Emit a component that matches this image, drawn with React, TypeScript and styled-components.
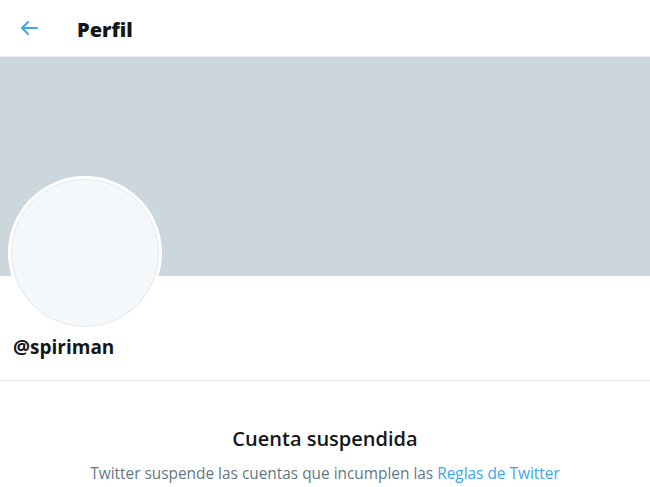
import React from "react";
import styled, { createGlobalStyle } from "styled-components";

const GlobalStyle = createGlobalStyle`
  html, body {
    margin: 0;
    padding: 0;
    background: #fff;
  }
  body {
    font-family: "Open Sans", "Noto Sans", "Liberation Sans", sans-serif;
  }
`;

export default function App() {
  return (
    <>
      <GlobalStyle />
      <Page>
        <Header>
          <BackButton aria-label="Volver">
            <svg width="24" height="24" viewBox="0 0 24 24">
              <path
                d="M20 11H7.414l4.293-4.293a1 1 0 0 0-1.414-1.414l-6 6a1 1 0 0 0 0 1.414l6 6a1 1 0 0 0 1.414-1.414L7.414 13H20a1 1 0 1 0 0-2z"
                fill="#3ea6ec"
              />
            </svg>
          </BackButton>
          <HeaderTitle>Perfil</HeaderTitle>
        </Header>
        <Banner />
        <ProfileInfo>
          <Avatar />
          <Handle>@spiriman</Handle>
        </ProfileInfo>
        <Notice>
          <NoticeTitle>Cuenta suspendida</NoticeTitle>
          <NoticeText>
            Twitter suspende las cuentas que incumplen las{" "}
            <Link href="#">Reglas de Twitter</Link>
          </NoticeText>
        </Notice>
      </Page>
    </>
  );
}

const Page = styled.div`
  width: 650px;
  height: 487px;
  overflow: hidden;
  display: flex;
  flex-direction: column;
`;

const Header = styled.div`
  height: 56px;
  display: flex;
  align-items: center;
  border-bottom: 1px solid #e6ecf0;
  padding-left: 17px;
  box-sizing: content-box;
`;

const BackButton = styled.button`
  width: 24px;
  height: 24px;
  padding: 0;
  border: none;
  background: none;
  display: flex;
  align-items: center;
  justify-content: center;
  margin-right: 36px;
`;

const HeaderTitle = styled.h2`
  margin: 3px 0 0;
  font-size: 20px;
  font-weight: 800;
  color: #14171a;
`;

const Banner = styled.div`
  height: 219px;
  background-color: #ccd6dd;
  flex-shrink: 0;
`;

const ProfileInfo = styled.div`
  padding: 0 13px;
  display: flex;
  flex-direction: column;
  border-bottom: 1px solid #e6ecf0;
  height: 104px;
  flex-shrink: 0;
`;

const Avatar = styled.div`
  width: 148px;
  height: 148px;
  margin-top: -100px;
  margin-left: -5px;
  border-radius: 50%;
  border: 3px solid #fff;
  background-color: #f5f8fa;
  box-shadow: 0 0 0 1px #e1e8ed inset;
`;

const Handle = styled.div`
  margin-top: 4px;
  font-size: 19px;
  font-weight: 700;
  color: #14171a;
  line-height: 26px;
`;

const Notice = styled.div`
  display: flex;
  flex-direction: column;
  align-items: center;
  padding-top: 44px;
`;

const NoticeTitle = styled.div`
  font-size: 20px;
  font-weight: 600;
  color: #14171a;
  line-height: 28px;
`;

const NoticeText = styled.div`
  margin-top: 11px;
  font-size: 15.4px;
  color: #657786;
  line-height: 20px;
`;

const Link = styled.a`
  color: #3ea6ec;
  text-decoration: none;
`;
